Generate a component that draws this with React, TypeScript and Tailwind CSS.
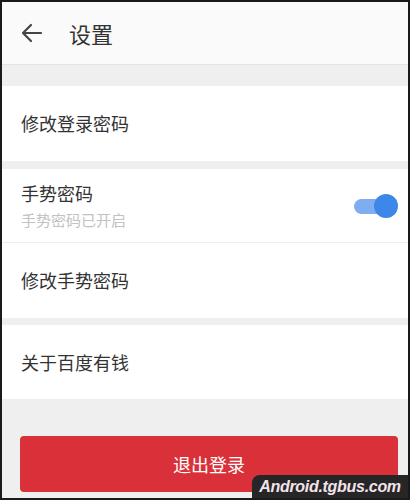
import React from "react";

const FONT = { fontFamily: '"Noto Sans CJK SC", "Noto Sans", sans-serif' };

function Row({ children, className = "" }: { children: React.ReactNode; className?: string }) {
  return <div className={`flex items-center bg-white px-[19px] ${className}`}>{children}</div>;
}

export default function App() {
  return (
    <div
      className="relative flex h-[500px] w-[410px] flex-col overflow-hidden border-t-2 border-r-2 border-b-2 border-l-2 border-[#1a1a1a] bg-[#efefef]"
      style={FONT}
    >
      {/* 顶栏 */}
      <header className="flex h-[63px] items-center border-b border-[#e4e4e4] bg-[#fafafa] pl-[19px]">
        <svg width="22" height="20" viewBox="0 0 22 20" fill="none" stroke="#444" strokeWidth="2.2" strokeLinecap="round" strokeLinejoin="round">
          <path d="M20 10H2.5M10 2L2 10l8 8" />
        </svg>
        <span className="ml-[26px] text-[22px] text-[#333]">设置</span>
      </header>

      <div className="h-[21px]" />

      <Row className="h-[75px]">
        <span className="text-[18px] text-[#333]">修改登录密码</span>
      </Row>

      <div className="h-[8px]" />

      <div className="bg-white">
        <div className="flex h-[74px] items-center justify-between border-b border-[#eeeeee] pl-[19px] pr-[10px]">
          <div className="flex flex-col">
            <span className="text-[18px] leading-[24px] text-[#333]">手势密码</span>
            <span className="mt-[5px] text-[15px] leading-[20px] text-[#c2c2c2]">手势密码已开启</span>
          </div>
          {/* 开关 */}
          <div className="relative h-[24px] w-[44px]">
            <div className="absolute left-0 top-[5px] h-[15px] w-[36px] rounded-full bg-[#7eaef0]" />
            <div className="absolute right-0 top-0 h-[24px] w-[24px] rounded-full bg-[#3d87ea]" />
          </div>
        </div>
        <Row className="h-[75px]">
          <span className="text-[18px] text-[#333]">修改手势密码</span>
        </Row>
      </div>

      <div className="h-[7px]" />

      <Row className="h-[74px]">
        <span className="text-[18px] text-[#333]">关于百度有钱</span>
      </Row>

      <div className="pl-[18px] pr-[10px] pt-[37px]">
        <button className="flex h-[56px] w-full items-center justify-center rounded-[4px] bg-[#d9303a] text-[18px] text-white">
          退出登录
        </button>
      </div>

      {/* 水印 */}
      <div className="absolute bottom-0 right-0 flex h-[23px] w-[156px] items-center justify-center rounded-tl-[8px] bg-[#262626]">
        <span
          className="text-[16px] font-bold italic tracking-[-0.3px] text-[#f3e4ea]"
          style={{ fontFamily: '"Liberation Sans", sans-serif' }}
        >
          Android.tgbus.com
        </span>
      </div>
    </div>
  );
}
